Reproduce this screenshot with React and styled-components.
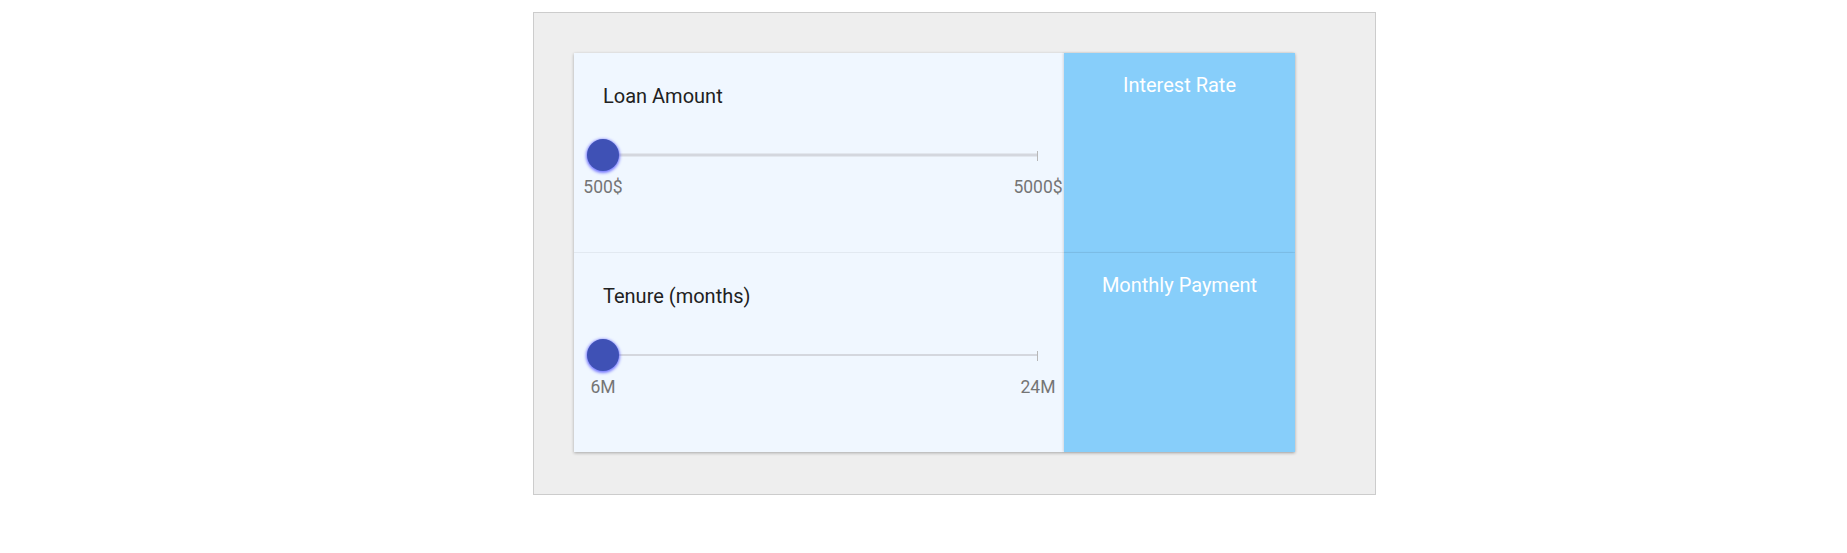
import React from "react";
import styled, { createGlobalStyle } from "styled-components";

const Global = createGlobalStyle`
  html, body { margin: 0; padding: 0; background: #ffffff; }
  body { font-family: Roboto, "Liberation Sans", Arial, sans-serif; }
`;

const Page = styled.div`
  padding: 12px 0 0 533px;
`;

const Frame = styled.div`
  box-sizing: border-box;
  width: 843px;
  height: 483px;
  padding: 40px;
  background: #eeeeee;
  border: 1px solid #cccccc;
`;

const Card = styled.div`
  width: 721px;
  display: flex;
  flex-direction: column;
  box-shadow: 0 1px 3px rgba(0, 0, 0, 0.3);
`;

const Row = styled.div`
  display: flex;
  height: ${(p) => p.$h}px;
`;

const SliderCell = styled.div`
  box-sizing: border-box;
  flex: 1;
  background: #f0f7ff;
  padding: 32px 0 0 0;
  display: flex;
  flex-direction: column;
  border-bottom: ${(p) => (p.$divider ? "1px solid #e2e9f1" : "none")};
`;

const Title = styled.div`
  font-size: 20px;
  line-height: 23px;
  color: #212121;
  padding-left: 29px;
`;

const SliderBlock = styled.div`
  margin: 32px 26px 0 29px;
  display: flex;
  flex-direction: column;
`;

const TrackArea = styled.div`
  position: relative;
  height: 30px;
`;

const Track = styled.div`
  position: absolute;
  left: 0;
  right: 0;
  top: 50%;
  height: ${(p) => p.$thick}px;
  transform: translateY(-50%);
  background: #d4d7de;
`;

const Tick = styled.div`
  position: absolute;
  right: 0;
  top: 50%;
  width: 1px;
  height: 10px;
  margin-top: -4px;
  background: #b8b8b8;
`;

const Thumb = styled.div`
  position: absolute;
  left: -16px;
  top: -1px;
  width: 32px;
  height: 32px;
  border-radius: 50%;
  background: #3f51b5;
  box-shadow: 0 1px 3px 1px rgba(80, 80, 255, 0.75);
`;

const Labels = styled.div`
  display: flex;
  justify-content: space-between;
  margin-top: 7px;
`;

const Label = styled.div`
  width: 0;
  display: flex;
  justify-content: center;
  white-space: nowrap;
  font-size: 17.5px;
  line-height: 21px;
  color: #757575;
`;

const ResultCell = styled.div`
  box-sizing: border-box;
  width: 231px;
  background: #87cefa;
  position: relative;
  z-index: 1;
  box-shadow: -1px 0 2px rgba(0, 0, 0, 0.12);
  display: flex;
  flex-direction: column;
  align-items: center;
  padding-top: 21px;
  border-bottom: ${(p) => (p.$divider ? "1px solid #80c4ef" : "none")};
`;

const ResultTitle = styled.div`
  font-size: 20px;
  line-height: 23px;
  color: #ffffff;
`;

const rows = [
  { title: "Loan Amount", min: "500$", max: "5000$", result: "Interest Rate", thick: 3, h: 200, divider: true },
  { title: "Tenure (months)", min: "6M", max: "24M", result: "Monthly Payment", thick: 2, h: 199, divider: false },
];

export default function App() {
  return (
    <>
      <Global />
      <Page>
        <Frame>
          <Card>
            {rows.map((r) => (
              <Row key={r.title} $h={r.h}>
                <SliderCell $divider={r.divider}>
                  <Title>{r.title}</Title>
                  <SliderBlock>
                    <TrackArea>
                      <Track $thick={r.thick} />
                      <Tick />
                      <Thumb />
                    </TrackArea>
                    <Labels>
                      <Label>{r.min}</Label>
                      <Label>{r.max}</Label>
                    </Labels>
                  </SliderBlock>
                </SliderCell>
                <ResultCell $divider={r.divider}>
                  <ResultTitle>{r.result}</ResultTitle>
                </ResultCell>
              </Row>
            ))}
          </Card>
        </Frame>
      </Page>
    </>
  );
}
